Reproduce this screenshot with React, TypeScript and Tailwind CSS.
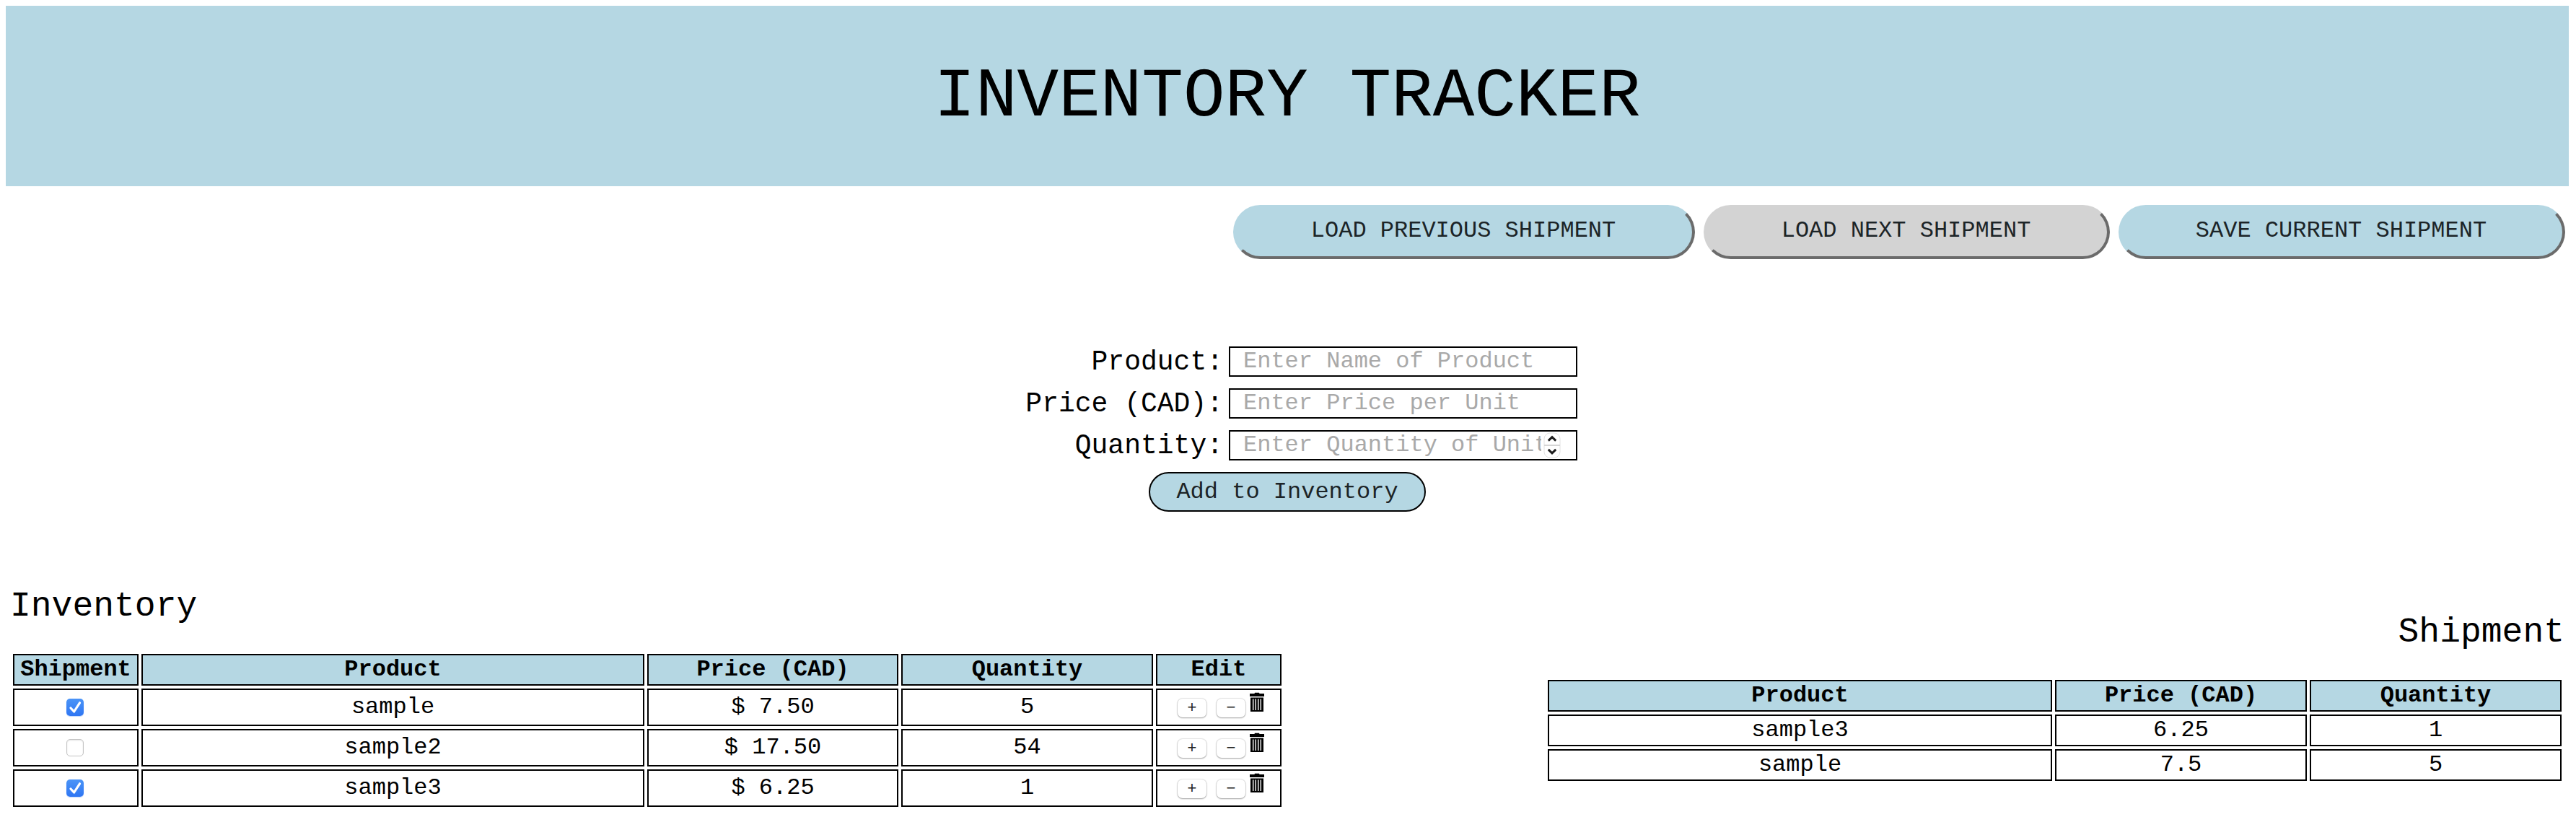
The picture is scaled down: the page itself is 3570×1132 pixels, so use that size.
import React from "react";

const cell = "box-border border-2 border-black flex justify-center text-[32px] leading-[36px]";
const head = cell + " bg-[#b5d7e3] font-bold h-11 pt-0.5";

const inventory = [
  { name: "sample", price: "$ 7.50", qty: "5", on: true },
  { name: "sample2", price: "$ 17.50", qty: "54", on: false },
  { name: "sample3", price: "$ 6.25", qty: "1", on: true },
];
const shipment = [
  { name: "sample3", price: "6.25", qty: "1" },
  { name: "sample", price: "7.5", qty: "5" },
];

function Check({ on }: { on: boolean }) {
  return on ? (
    <span className="mt-3 mr-0.5 flex size-6 rounded-[5px] bg-linear-to-b from-[#4b94f7] to-[#2f76f3] shadow-[0_1px_1px_rgba(47,118,243,0.3)]">
      <svg viewBox="0 0 24 24" className="size-6" fill="none" stroke="#fff" strokeWidth="3.2" strokeLinecap="round" strokeLinejoin="round">
        <path d="M6 13L10.6 18L18.5 5.8" />
      </svg>
    </span>
  ) : (
    <span className="mt-3 mr-0.5 size-6 rounded-[5px] border border-[#c4c4c4] bg-white shadow-[inset_0_1px_2px_rgba(0,0,0,0.12)]" />
  );
}

function Trash() {
  return (
    <svg viewBox="0 0 20 27" className="ml-1.5 mt-[3px] h-[27px] w-5">
      <path d="M0 2H6.5L7 .8H13L13.5 2H20V6H0Z" fill="#000" />
      <path d="M1 7.5H19V27H1Z" fill="#000" />
      <path d="M4.7 9.5V25M8.2 9.5V25M11.8 9.5V25M15.3 9.5V25" stroke="#fff" strokeWidth="1.4" />
    </svg>
  );
}

function Step({ sign }: { sign: string }) {
  return (
    <button className="mt-3 flex h-[26px] w-10 items-center justify-center rounded-[7px] bg-white pb-[3px] shadow-[0_0_1px_1px_rgba(0,0,0,0.10),0_1px_2px_rgba(0,0,0,0.3)] font-['Liberation_Sans',sans-serif] text-[22px] leading-[24px] text-[#222]">
      {sign}
    </button>
  );
}

function Field({ label, placeholder, spinner }: { label: string; placeholder: string; spinner?: boolean }) {
  return (
    <div className="flex h-[42px]">
      <label className="w-[312px] pt-px text-right text-[38px] leading-[42px]">{label}</label>
      <div className="relative ml-2 h-[42px] w-[483px] overflow-hidden border-2 border-black pl-[18px]">
        <div className="w-[413px] overflow-hidden whitespace-nowrap pt-px text-[32px] leading-[36px] text-[#a9a9a9]">{placeholder}</div>
        {spinner && (
          <svg viewBox="0 0 24 36" className="absolute right-[21px] top-px h-9 w-6" fill="none">
            <rect x="1" y="1" width="22" height="34" rx="8" fill="#fff" stroke="#e2e2e2" />
            <path d="M1 18H23" stroke="#d5d5d5" strokeWidth="2" />
            <path d="M6.8 11.6L12 6.6L17.2 11.6M6.8 23.8L12 28.8L17.2 23.8" stroke="#1c1c1c" strokeWidth="3" />
          </svg>
        )}
      </div>
    </div>
  );
}

const action = "h-[75px] rounded-[38px] border-4 border-t-transparent border-l-transparent border-r-[#6b6b6b] border-b-[#6b6b6b] bg-origin-border pb-1 pr-0.5 text-[32px] leading-[36px] text-[#1c2427]";

export default function App() {
  return (
    <div className="h-[1132px] w-[3570px] overflow-hidden bg-white px-2 pt-2 font-['Liberation_Mono',monospace] text-black">
      <header className="mr-0.5 flex h-[250px] items-center justify-center bg-[#b5d7e3] pt-1">
        <h1 className="text-[96px] leading-[108px]">INVENTORY TRACKER</h1>
      </header>
      <div className="mt-[26px] flex justify-end gap-3 pr-[7px]">
        <button className={action + " w-[640px] bg-[#b5d7e3]"}>LOAD PREVIOUS SHIPMENT</button>
        <button className={action + " w-[563px] bg-[#d3d3d3]"}>LOAD NEXT SHIPMENT</button>
        <button className={action + " w-[619px] bg-[#b5d7e3]"}>SAVE CURRENT SHIPMENT</button>
      </div>
      <form className="ml-[1375px] mt-[121px] flex w-[804px] flex-col gap-4">
        <Field label="Product:" placeholder="Enter Name of Product" />
        <Field label="Price (CAD):" placeholder="Enter Price per Unit" />
        <Field label="Quantity:" placeholder="Enter Quantity of Units" spinner />
        <button type="button" className="ml-[209px] h-[55px] w-[384px] rounded-[28px] border-2 border-black bg-[#b5d7e3] text-[32px] leading-[36px] text-[#1c2427]">
          Add to Inventory
        </button>
      </form>
      <main className="flex justify-between pl-[10px] pr-3">
        <section className="w-[1758px] pt-[104px]">
          <h2 className="-ml-1 text-[48px] leading-[54px]">Inventory</h2>
          <div className="mt-[39px] grid grid-cols-[174px_697px_348px_349px_174px] gap-1">
            {["Shipment", "Product", "Price (CAD)", "Quantity", "Edit"].map((h) => (
              <div key={h} className={head}>{h}</div>
            ))}
            {inventory.map((r) => (
              <React.Fragment key={r.name}>
                <div className={cell + " h-[52px]"}><Check on={r.on} /></div>
                <div className={cell + " h-[52px] pt-1.5"}>{r.name}</div>
                <div className={cell + " h-[52px] pt-1.5"}>{r.price}</div>
                <div className={cell + " h-[52px] pt-1.5"}>{r.qty}</div>
                <div className={cell + " h-[52px] pl-1.5"}>
                  <Step sign="+" />
                  <span className="w-3.5" />
                  <Step sign="−" />
                  <Trash />
                </div>
              </React.Fragment>
            ))}
          </div>
        </section>
        <section className="w-[1405px] pt-[140px]">
          <h2 className="-mr-1 text-right text-[48px] leading-[54px]">Shipment</h2>
          <div className="mt-[39px] grid grid-cols-[699px_349px_349px] gap-1">
            {["Product", "Price (CAD)", "Quantity"].map((h) => (
              <div key={h} className={head}>{h}</div>
            ))}
            {shipment.map((r) => (
              <React.Fragment key={r.name}>
                <div className={cell + " h-11 pt-0.5"}>{r.name}</div>
                <div className={cell + " h-11 pt-0.5"}>{r.price}</div>
                <div className={cell + " h-11 pt-0.5"}>{r.qty}</div>
              </React.Fragment>
            ))}
          </div>
        </section>
      </main>
    </div>
  );
}
